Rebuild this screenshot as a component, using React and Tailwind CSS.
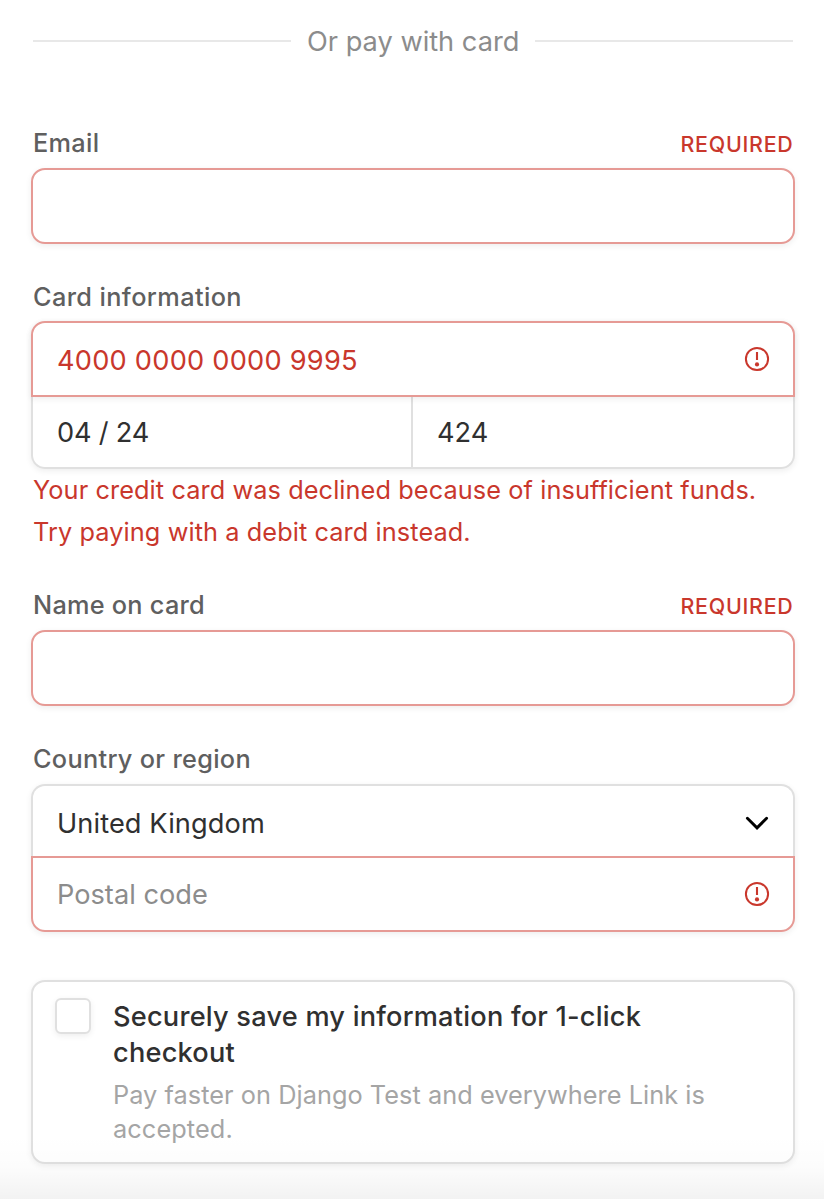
const RED_BOX = "border-2 border-[#e69a95] bg-white";
const GREY_BOX = "border-[#e0e0e0] bg-white";
const SHADOW = "shadow-[0_2px_6px_rgba(0,0,0,0.07)]";

function AlertIcon() {
  return (
    <svg className="h-6 w-6 shrink-0 overflow-visible" viewBox="0 0 24 24" fill="none">
      <circle cx="12" cy="12" r="11.1" stroke="#c9372c" strokeWidth="2" />
      <path d="M12 5v8" stroke="#c9372c" strokeWidth="2.1" />
      <circle cx="12" cy="17.4" r="2.1" fill="#c9372c" />
    </svg>
  );
}

function ChevronIcon() {
  return (
    <svg className="mt-[4px] h-6 w-6 shrink-0" viewBox="0 0 24 24" fill="none">
      <path d="M2.4 7.3 12 16.9l9.6-9.6" stroke="#000" strokeWidth="2.9" strokeLinecap="round" />
    </svg>
  );
}

function Label({ children, tracking, required }) {
  return (
    <div className="flex h-9 items-center justify-between pr-[1.5px] pl-[2px]">
      <span className={`text-[25.3px] font-medium text-[#5f5f5f] ${tracking}`}>{children}</span>
      {required && (
        <span className="pt-[2px] text-[21.4px] font-medium tracking-[0.75px] text-[#c9372c]">REQUIRED</span>
      )}
    </div>
  );
}

export default function App() {
  return (
    <div className="relative h-[1199px] w-[824px] overflow-hidden bg-white pt-[21px] pr-[29px] pl-[31px] font-['Inter','Liberation_Sans',sans-serif] whitespace-nowrap">
      <div className="flex h-10 items-center gap-4 px-[2px]">
        <div className="h-[2px] flex-1 bg-[#e8e8e8]" />
        <div className="w-[212px] pt-[2px] text-[27.2px] text-[#8c8c8c]">Or pay with card</div>
        <div className="h-[2px] flex-1 bg-[#e8e8e8]" />
      </div>

      <div className="mt-[64px]">
        <Label required tracking="tracking-[0.3px]">Email</Label>
        <div className={`mt-[7px] h-[76px] rounded-[14px] ${RED_BOX} ${SHADOW}`} />
      </div>

      <div className="mt-[35px]">
        <Label tracking="tracking-[0.38px]">Card information</Label>
        <div className={`mt-[6px] rounded-[14px] ${SHADOW}`}>
          <div className={`relative flex h-[76px] items-center justify-between rounded-t-[14px] px-6 ${RED_BOX} ${SHADOW}`}>
            <span className="pt-[5px] text-[27.2px] tracking-[0.24px] text-[#c9372c]">4000 0000 0000 9995</span>
            <AlertIcon />
          </div>
          <div className="flex h-[72px] text-[27.2px] text-[#303030]">
            <div className={`flex w-[382px] items-center rounded-bl-[14px] border-r-2 border-b-2 border-l-2 pt-[2px] pl-6 ${GREY_BOX}`}>
              <span className="tracking-[-0.2px]">04 / 24</span>
            </div>
            <div className={`flex flex-1 items-center rounded-br-[14px] border-r-2 border-b-2 pt-[2px] pl-6 ${GREY_BOX}`}>
              <span>424</span>
            </div>
          </div>
        </div>
        <div className="flex flex-col pb-px pl-[2px] text-[25.3px] leading-[42px] text-[#c9372c]">
          <span className="tracking-[0.09px]">Your credit card was declined because of insufficient funds.</span>
          <span className="tracking-[0.09px]">Try paying with a debit card instead.</span>
        </div>
      </div>

      <div className="mt-[33px]">
        <Label required tracking="tracking-[0.25px]">Name on card</Label>
        <div className={`mt-[7px] h-[76px] rounded-[14px] ${RED_BOX} ${SHADOW}`} />
      </div>

      <div className="mt-[35px]">
        <Label tracking="tracking-[0.3px]">Country or region</Label>
        <div className={`mt-[7px] rounded-[14px] ${SHADOW}`}>
          <div className={`flex h-[72px] items-center justify-between rounded-t-[14px] border-t-2 border-r-2 border-l-2 px-6 ${GREY_BOX}`}>
            <span className="pt-[7px] text-[27.2px] tracking-[0.1px] text-[#303030]">United Kingdom</span>
            <ChevronIcon />
          </div>
          <div className={`flex h-[76px] items-center justify-between rounded-b-[14px] px-6 ${RED_BOX}`}>
            <span className="pt-[2px] text-[27.2px] text-[#8c8c8c]">Postal code</span>
            <AlertIcon />
          </div>
        </div>
      </div>

      <div className={`mt-12 flex h-[184px] gap-[22px] rounded-[14px] border-2 px-[22px] pt-4 ${GREY_BOX} ${SHADOW}`}>
        <div className={`h-9 w-9 shrink-0 rounded-[6px] border-2 ${GREY_BOX} ${SHADOW}`} />
        <div className="flex flex-col pt-px">
          <div className="flex flex-col text-[27.2px] leading-9 font-medium text-[#303030]">
            <span className="tracking-[0.21px]">Securely save my information for 1-click</span>
            <span className="tracking-[0.21px]">checkout</span>
          </div>
          <div className="mt-[7px] flex flex-col text-[25.3px] leading-[34px] text-[#a5a5a5]">
            <span className="tracking-[0.05px]">Pay faster on Django Test and everywhere Link is</span>
            <span className="tracking-[0.1px]">accepted.</span>
          </div>
        </div>
      </div>

      <div className="pointer-events-none absolute inset-x-0 bottom-0 h-16 bg-linear-to-b from-transparent via-black/[0.012] to-black/5" />
    </div>
  );
}
